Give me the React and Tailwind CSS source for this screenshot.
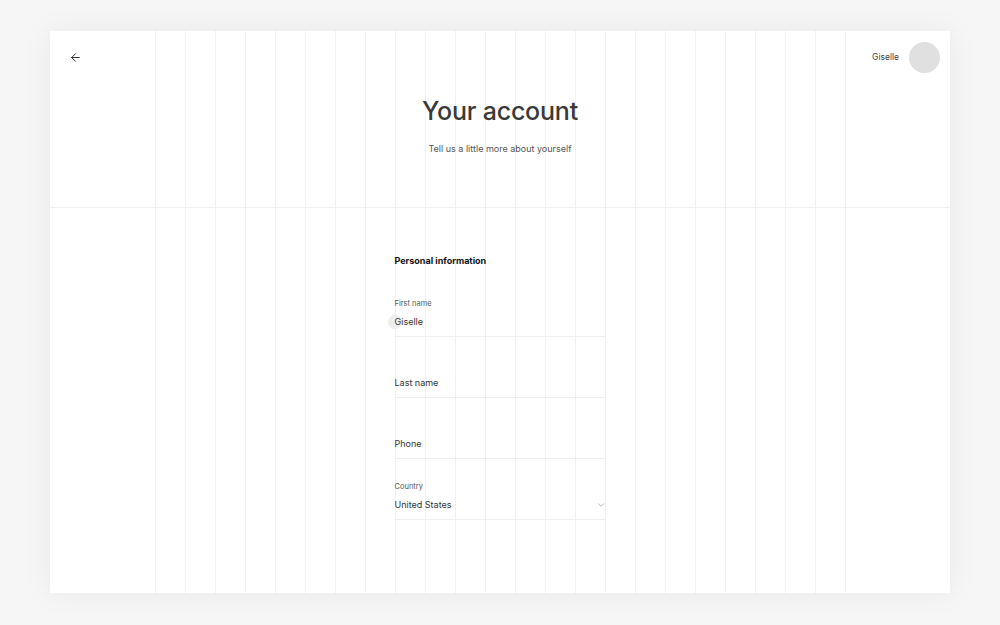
import React from 'react';
import { ArrowLeft, ChevronDown } from 'lucide-react';

const fields = [
  { label: 'First name', value: 'Giselle', filled: true },
  { label: null, value: 'Last name' },
  { label: null, value: 'Phone' },
  { label: 'Country', value: 'United States', select: true },
];

export default function App() {
  return (
    <div className="h-screen bg-[#f6f6f6] pt-[31px] px-[50px] font-['Inter',sans-serif]">
      <div className="relative bg-white h-[562px] shadow-[0_0_30px_rgba(0,0,0,0.06)]">
        {/* column guides */}
        <div className="absolute inset-0 flex justify-center pointer-events-none">
          {Array.from({ length: 24 }).map((_, i) => (
            <div
              key={i}
              className={`h-full border-l border-[#f0f0f0] ${i === 23 ? 'w-0' : 'w-[30px]'}`}
            />
          ))}
        </div>

        {/* Header */}
        <header className="relative h-[177px] border-b border-[#efefef]">
          <div className="flex items-center justify-between pl-[19px] pr-[10px] pt-[10px]">
            <ArrowLeft size={13} strokeWidth={1.7} className="text-[#222]" />
            <div className="flex items-center gap-[10px] pt-[1px]">
              <span className="text-[8.5px] text-[#444]">Giselle</span>
              <div className="w-[31px] h-[31px] rounded-full bg-[#e0e0e0]" />
            </div>
          </div>
          <h1 className="mt-[22px] text-center text-[25px] leading-[32px] font-medium text-[#3a3a3a] tracking-[-0.2px]">
            Your account
          </h1>
          <p className="mt-[15px] text-center text-[9px] leading-[14px] text-[#555]">
            Tell us a little more about yourself
          </p>
        </header>

        {/* Form */}
        <main className="relative w-[211px] mx-auto pt-[46px]">
          <h2 className="text-[9px] leading-[14px] font-bold text-[#111]">Personal information</h2>
          <div className="mt-[8px]">
            {fields.map((f) => (
              <div
                key={f.value}
                className="relative h-[61px] border-b border-[#eeeeee] flex flex-col justify-end pb-[8px]"
              >
                {f.label && (
                  <span className="text-[7.5px] leading-[10px] text-[#555] mb-[7px]">{f.label}</span>
                )}
                <div className="flex items-center justify-between">
                  <span className="relative text-[9px] leading-[12px] text-[#333]">
                    {f.filled && (
                      <span className="absolute -left-[7px] top-[-1px] w-[14px] h-[14px] rounded-full bg-[#eeeeee]" />
                    )}
                    <span className="relative">{f.value}</span>
                  </span>
                  {f.select && <ChevronDown size={10} strokeWidth={1.5} className="text-[#888]" />}
                </div>
              </div>
            ))}
          </div>
        </main>
      </div>
    </div>
  );
}
